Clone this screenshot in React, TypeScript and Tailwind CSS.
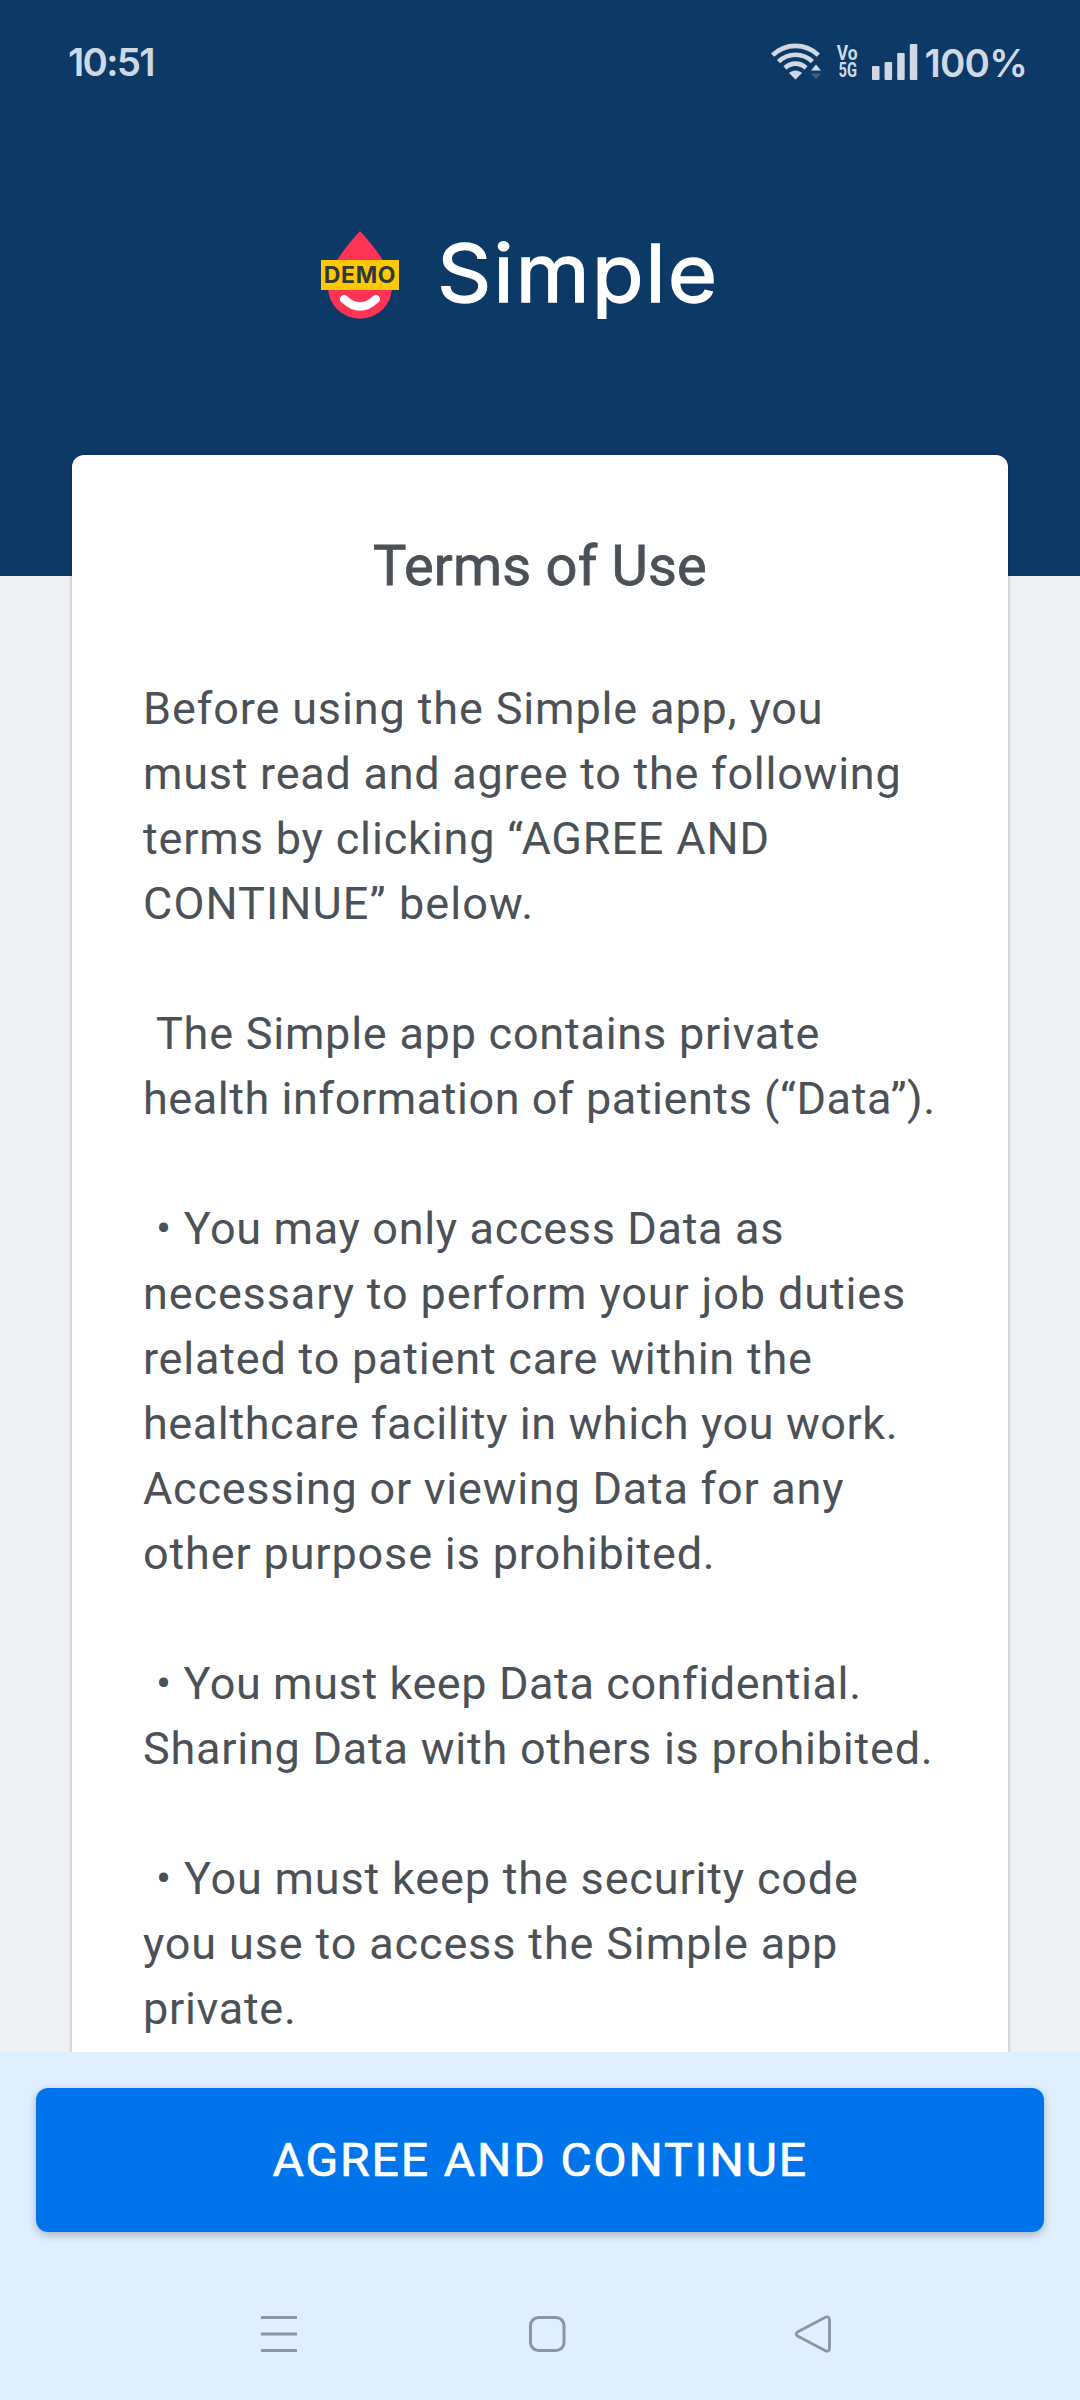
const paragraphs: { indent?: boolean; lines: { text: string; tracking: string }[] }[] = [
  {
    lines: [
      { text: 'Before using the Simple app, you', tracking: 'tracking-[0.87px]' },
      { text: 'must read and agree to the following', tracking: 'tracking-[0.74px]' },
      { text: 'terms by clicking “AGREE AND', tracking: 'tracking-[0.84px]' },
      { text: 'CONTINUE” below.', tracking: 'tracking-[1.1px]' },
    ],
  },
  {
    indent: true,
    lines: [
      { text: 'The Simple app contains private', tracking: 'tracking-[0.76px]' },
      { text: 'health information of patients (“Data”).', tracking: 'tracking-[0.55px]' },
    ],
  },
  {
    indent: true,
    lines: [
      { text: '• You may only access Data as', tracking: 'tracking-[0.67px]' },
      { text: 'necessary to perform your job duties', tracking: 'tracking-[0.87px]' },
      { text: 'related to patient care within the', tracking: 'tracking-[0.79px]' },
      { text: 'healthcare facility in which you work.', tracking: 'tracking-[0.58px]' },
      { text: 'Accessing or viewing Data for any', tracking: 'tracking-[0.75px]' },
      { text: 'other purpose is prohibited.', tracking: 'tracking-[0.85px]' },
    ],
  },
  {
    indent: true,
    lines: [
      { text: '• You must keep Data confidential.', tracking: 'tracking-[0.59px]' },
      { text: 'Sharing Data with others is prohibited.', tracking: 'tracking-[0.76px]' },
    ],
  },
  {
    indent: true,
    lines: [
      { text: '• You must keep the security code', tracking: 'tracking-[0.83px]' },
      { text: 'you use to access the Simple app', tracking: 'tracking-[0.86px]' },
      { text: 'private.', tracking: 'tracking-[0.7px]' },
    ],
  },
];

function StatusBar() {
  return (
    <div className="flex h-[110px] items-start justify-between pl-[68px] pr-[53px] pt-[39px] text-[#cfd8e3]">
      <span className="text-[38.5px] leading-[46px] font-semibold tracking-[-1.7px]">10:51</span>
      <div className="flex items-start">
        <svg className="mt-[4px]" width="52" height="38" viewBox="0 0 52 38" fill="none">
          <g stroke="currentColor" strokeWidth="4.6">
            <path d="M2.6 12.2C15.6 -0.2 35.4 -0.2 48.4 12.2" />
            <path d="M8.6 18.6C18 9.4 33 9.4 42.4 18.6" />
            <path d="M15 25C21 19.2 30 19.2 36 25" />
          </g>
          <path d="M25.5 36.5L19 30C22.5 26.5 28.5 26.5 32 30Z" fill="currentColor" />
          <path d="M46 21.5L51 27.5H41Z" fill="currentColor" />
          <path d="M41 30.5H51L46 36.3Z" fill="#3e5f84" />
        </svg>
        <div className="ml-[14px] mt-[6px] flex w-[22px] flex-col items-center font-['Roboto'] text-[20.5px] leading-[17px] font-bold">
          <span className="h-[17px] origin-center scale-x-[0.85]">Vo</span>
          <span className="h-[17px] origin-center scale-x-[0.72]">5G</span>
        </div>
        <svg className="ml-[14px] mt-[5px]" width="46" height="36" viewBox="0 0 46 36" fill="currentColor">
          <rect x="0" y="22" width="7.5" height="14" rx="1" />
          <rect x="12.6" y="18" width="7.5" height="18" rx="1" />
          <rect x="25.2" y="9" width="7.5" height="27" rx="1" />
          <rect x="37.8" y="0" width="7.5" height="36" rx="1" />
        </svg>
        <span className="ml-[6px] text-[38.5px] leading-[48px] font-semibold tracking-[-0.8px]">100%</span>
      </div>
    </div>
  );
}

function Logo() {
  return (
    <div className="flex items-start pl-[321px] pt-[121px]">
      <div className="relative h-[88px] w-[78px]">
        <svg width="78" height="88" viewBox="0 0 78 88" fill="none">
          <path d="M39 0C28 12 7 36 7 56A32 31.7 0 0 0 71 56C71 36 50 12 39 0Z" fill="#ff3355" />
          <path d="M23 68Q39 83 55 68" stroke="#fff" strokeWidth="8" strokeLinecap="round" />
        </svg>
        <div className="absolute inset-x-0 top-[29px] flex h-[30px] items-center justify-center bg-[#ffc800] pt-px text-[23px] leading-none font-bold tracking-[0.7px] text-[#2f383f]">
          DEMO
        </div>
      </div>
      <div className="ml-[38px] mt-[-7px] origin-left scale-x-[1.06] text-[80px] leading-[98px] font-normal tracking-[1.7px] text-white [-webkit-text-stroke:1.3px_#fff]">
        Simple
      </div>
    </div>
  );
}

function NavBar() {
  return (
    <div className="mt-[82px] flex items-center pl-[259px] text-[#8a96a1]">
      <svg width="40" height="40" viewBox="0 0 40 40" stroke="currentColor" strokeWidth="3" strokeLinecap="butt">
        <path d="M2 3.5H38M2 20H38M2 36.5H38" />
      </svg>
      <svg className="ml-[228px]" width="40" height="40" viewBox="0 0 40 40" fill="none" stroke="currentColor" strokeWidth="3">
        <rect x="3.5" y="3.5" width="33.5" height="33" rx="8" />
      </svg>
      <svg className="ml-[226px]" width="40" height="40" viewBox="0 0 40 40" fill="none" stroke="currentColor" strokeWidth="2.8" strokeLinejoin="round">
        <path d="M4.5 18L32 3.4Q36.5 1.5 36.5 6V34Q36.5 38.5 32 36.6L4.5 22Q1.8 20 4.5 18Z" />
      </svg>
    </div>
  );
}

export default function App() {
  return (
    <div className="flex h-[2400px] w-[1080px] flex-col overflow-hidden bg-[#f0f1f5] font-['Inter',sans-serif]">
      <header className="h-[576px] shrink-0 bg-[#0d3966]">
        <StatusBar />
        <Logo />
      </header>
      <main className="relative z-10 mx-[72px] mt-[-121px] h-[1597px] shrink-0 rounded-t-xl bg-white pt-[78px] pl-[71px] font-['Roboto',sans-serif] text-[#4b5157] shadow-[0_1px_4px_rgba(0,0,0,0.3)]">
        <h1 className="mr-[71px] text-center text-[56px] leading-[66px] font-normal tracking-[0.2px] [-webkit-text-stroke:0.8px_#4b5157]">
          Terms of Use
        </h1>
        <div className="mt-[77px] flex flex-col gap-[65px] text-[45px] leading-[65px] font-normal">
          {paragraphs.map((p, i) => (
            <div key={i}>
              {p.lines.map((line, j) => (
                <p key={j} className={`whitespace-nowrap ${line.tracking} ${p.indent && j === 0 ? 'pl-[13px]' : ''}`}>
                  {line.text}
                </p>
              ))}
            </div>
          ))}
        </div>
      </main>
      <footer className="relative z-20 flex-1 bg-[#dfefff] pt-9">
        <button className="mx-9 flex h-36 w-[1008px] items-center justify-center rounded-xl bg-[#0075eb] font-['Roboto',sans-serif] text-[46px] tracking-[1.8px] text-white shadow-[0_3px_8px_rgba(0,0,0,0.25)] [-webkit-text-stroke:0.7px_#fff]">
          <span className="scale-x-[1.045]">AGREE AND CONTINUE</span>
        </button>
        <NavBar />
      </footer>
    </div>
  );
}
